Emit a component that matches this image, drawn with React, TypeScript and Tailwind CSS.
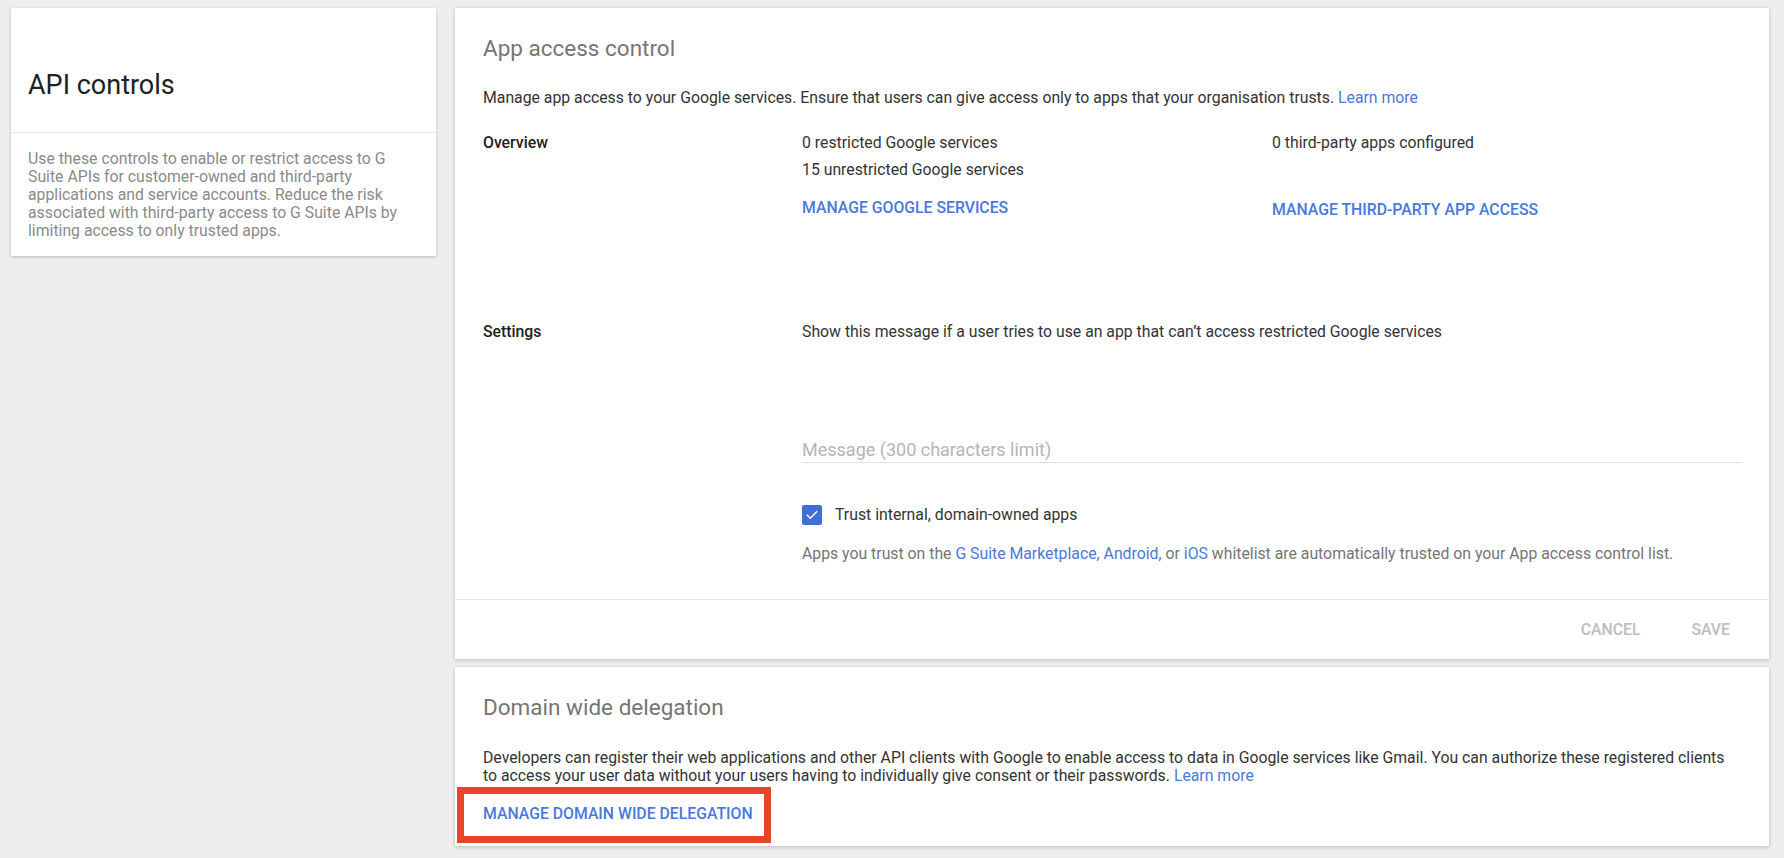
import React from "react";

const font = { fontFamily: "Roboto, 'Noto Sans', Arial, sans-serif" };

export default function App() {
  return (
    <div
      className="min-h-[858px] w-full bg-[#eeeeee] flex items-start gap-[19px] pl-[11px] pr-[15px] pt-[8px] text-[15.8px] text-[#212121]"
      style={font}
    >
      {/* Left card */}
      <div className="w-[425px] shrink-0 bg-white shadow-[0_1px_3px_rgba(0,0,0,0.22)]">
        <div className="pt-[61px] pb-[31px] px-[17px] border-b border-[#e6e6e6]">
          <h1 className="text-[27px] leading-[32px] text-[#212121] font-normal">API controls</h1>
        </div>
        <p className="pl-[17px] pt-[17px] pb-[16px] pr-[8px] text-[15.8px] leading-[18px] text-[#8a8a8a]">
          Use these controls to enable or restrict access to G
          <br />
          Suite APIs for customer-owned and third-party
          <br />
          applications and service accounts. Reduce the risk
          <br />
          associated with third-party access to G Suite APIs by
          <br />
          limiting access to only trusted apps.
        </p>
      </div>

      {/* Right column */}
      <div className="flex-1 flex flex-col gap-[8px]">
        {/* App access control card */}
        <div className="bg-white shadow-[0_1px_4px_rgba(0,0,0,0.22)]">
          <div className="pl-[28px] pr-[27px] pt-[24px] pb-[35px]">
            <h2 className="text-[22.5px] leading-[32px] text-[#757575] font-normal">App access control</h2>
            <p className="mt-[24px] leading-[20px] text-[#333333]">
              Manage app access to your Google services. Ensure that users can give access only to apps that your
              organisation trusts. <span className="text-[#4a78dd]">Learn more</span>
            </p>

            <div className="mt-[25px] grid grid-cols-[319px_470px_1fr] gap-y-[18px]">
              <div className="font-medium leading-[20px]">Overview</div>
              <div className="flex flex-col gap-[7px] leading-[20px] text-[#333333]">
                <span>0 restricted Google services</span>
                <span>15 unrestricted Google services</span>
              </div>
              <div className="leading-[20px] text-[#333333]">0 third-party apps configured</div>
              <div />
              <div className="font-medium leading-[20px] text-[#4a78dd] uppercase">Manage Google services</div>
              <div className="font-medium leading-[20px] text-[#4a78dd] uppercase pt-[2px]">
                Manage third-party app access
              </div>
            </div>

            <div className="mt-[102px] grid grid-cols-[319px_1fr]">
              <div className="font-medium leading-[20px]">Settings</div>
              <div className="flex flex-col">
                <div className="leading-[20px] text-[#333333]">
                  Show this message if a user tries to use an app that can’t access restricted Google services
                </div>
                <input
                  type="text"
                  placeholder="Message (300 characters limit)"
                  className="mt-[95px] h-[26px] w-full border-b border-[#e0e0e0] text-[18px] outline-none placeholder:text-[#b5b5b5] bg-transparent"
                  style={font}
                />
                <label className="mt-[42px] flex items-center gap-[13px] leading-[20px]">
                  <span className="w-[20px] h-[20px] rounded-[2px] bg-[#3f6ed6] flex items-center justify-center">
                    <svg width="14" height="14" viewBox="0 0 24 24" fill="none">
                      <path d="M4 12.5l5 5L20 6.5" stroke="white" strokeWidth="2.6" strokeLinecap="square" />
                    </svg>
                  </span>
                  <span className="text-[#333333]">Trust internal, domain-owned apps</span>
                </label>
                <p className="mt-[19px] leading-[20px] text-[#757575]">
                  Apps you trust on the <span className="text-[#4a78dd]">G Suite Marketplace</span>,{" "}
                  <span className="text-[#4a78dd]">Android</span>, or <span className="text-[#4a78dd]">iOS</span>{" "}
                  whitelist are automatically trusted on your App access control list.
                </p>
              </div>
            </div>
          </div>
          <div className="border-t border-[#e6e6e6] h-[60px] flex items-center justify-end pr-[27px] gap-[27px]">
            <button className="px-[12px] font-medium uppercase text-[#bdbdbd] leading-[20px]" style={font}>
              Cancel
            </button>
            <button className="px-[12px] font-medium uppercase text-[#bdbdbd] leading-[20px]" style={font}>
              Save
            </button>
          </div>
        </div>

        {/* Domain wide delegation card */}
        <div className="relative bg-white shadow-[0_1px_4px_rgba(0,0,0,0.22)] pl-[28px] pr-[2px] pt-[24px] pb-[22px]">
          <h2 className="text-[22.5px] leading-[32px] text-[#757575] font-normal">Domain wide delegation</h2>
          <p className="mt-[26px] leading-[18px] text-[#333333]">
            <span className="whitespace-nowrap">
              Developers can register their web applications and other API clients with Google to enable access to
              data in Google services like Gmail. You can authorize these registered clients
            </span>
            <br />
            to access your user data without your users having to individually give consent or their passwords.{" "}
            <span className="text-[#4a78dd]">Learn more</span>
          </p>
          <div className="mt-[19px] font-medium leading-[20px] text-[#4a78dd] uppercase">
            Manage domain wide delegation
          </div>
          <div className="absolute left-[2px] top-[120px] w-[314px] h-[56px] border-[7px] border-[#e8432c] pointer-events-none" />
        </div>
      </div>
    </div>
  );
}
